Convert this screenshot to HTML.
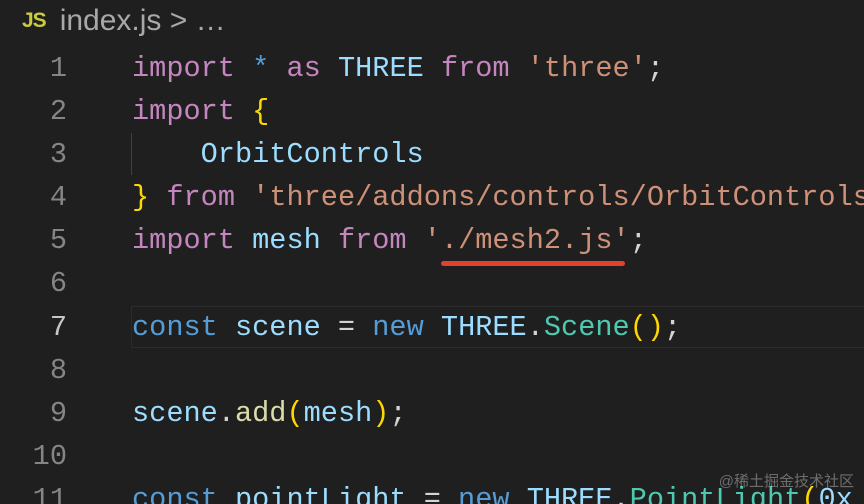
<!DOCTYPE html>
<html><head><meta charset="utf-8"><style>
html,body{margin:0;padding:0;width:864px;height:504px;overflow:hidden;background:#1f1f1f;}
body{position:relative;font-family:"Liberation Mono","DejaVu Sans Mono",monospace;}
.wrap{position:absolute;left:0;top:0;width:864px;height:504px;overflow:hidden}
.hdr{position:absolute;left:22px;top:1px;height:40px;font-family:"Liberation Sans",sans-serif;font-size:30px;color:#a8a8a8;white-space:nowrap;line-height:40px}
.hdr .js{color:#cbcb41;font-weight:bold;font-size:21px;margin-right:14px;letter-spacing:-1px;vertical-align:3px}
.ln{position:absolute;left:0;width:67px;text-align:right;font-size:28.6px;color:#858585;line-height:43.1px}
.code{position:absolute;left:132px;width:732px;overflow:hidden;font-size:28.6px;line-height:43.1px;white-space:pre;color:#d4d4d4}
.k{color:#c586c0}.b{color:#569cd6}.v{color:#9cdcfe}.s{color:#ce9178}.c{color:#4ec9b0}.f{color:#dcdcaa}.y{color:#ffd700}
.hl{position:absolute;left:131px;top:306px;width:740px;height:42px;border:1px solid #2c2c2c;box-sizing:border-box}
.guide{position:absolute;left:131px;top:133px;width:1px;height:42px;background:#404040}
.ul{position:absolute;left:441px;top:261px;width:184px;height:5px;border-radius:3px;background:#e2412e}
.wm{position:absolute;right:10px;top:470px;font-family:"Liberation Sans","Noto Sans CJK SC",sans-serif;font-size:15px;color:rgba(255,255,255,0.35)}
</style></head><body><div class="wrap">
<div class="hdr"><span class="js">JS</span>index.js &gt; …</div>
<div class="hl"></div>
<div class="guide"></div>
<div class="ln" style="top:47px">1<br>2<br>3<br>4<br>5<br>6<br><span style="color:#c6c6c6">7</span><br>8<br>9<br>10<br>11</div>
<div class="code" style="top:47px"><span class="k">import</span> <span class="b">*</span> <span class="k">as</span> <span class="v">THREE</span> <span class="k">from</span> <span class="s">'three'</span>;
<span class="k">import</span> <span class="y">{</span>
    <span class="v">OrbitControls</span>
<span class="y">}</span> <span class="k">from</span> <span class="s">'three/addons/controls/OrbitControls</span>
<span class="k">import</span> <span class="v">mesh</span> <span class="k">from</span> <span class="s">'./mesh2.js'</span>;

<span class="b">const</span> <span class="v">scene</span> = <span class="b">new</span> <span class="v">THREE</span>.<span class="c">Scene</span><span class="y">()</span>;

<span class="v">scene</span>.<span class="f">add</span><span class="y">(</span><span class="v">mesh</span><span class="y">)</span>;

<span class="b">const</span> <span class="v">pointLight</span> = <span class="b">new</span> <span class="v">THREE</span>.<span class="c">PointLight</span><span class="y">(</span><span class="v">0x</span></div>
<div class="ul"></div>
<div class="wm">@稀土掘金技术社区</div>
</div></body></html>
